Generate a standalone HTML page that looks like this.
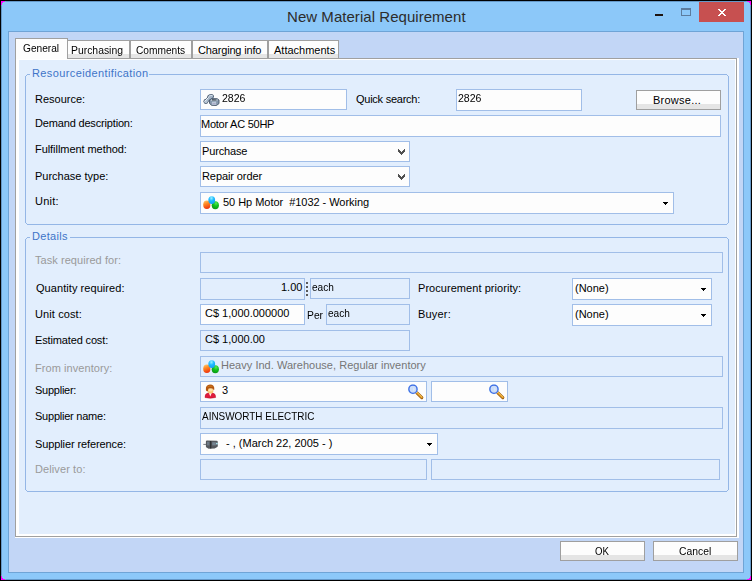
<!DOCTYPE html>
<html><head><meta charset="utf-8"><title>New Material Requirement</title>
<style>
html,body{margin:0;padding:0}
body{width:752px;height:581px;position:relative;overflow:hidden;background:#000;font-family:"Liberation Sans",sans-serif}
body div,body svg,body span{position:absolute;box-sizing:content-box}
.t{white-space:pre;line-height:14px;font-size:11px;transform-origin:0 0}
.f{border:1px solid #A1BEE8}
.btn{border:1px solid #9F9F9F;background:#FDFDFD}
.btn i{position:absolute;left:0;right:0;bottom:0;height:5px;background:#E5E5E5}
.tab{border:1px solid #A0A0A0;border-bottom:none;background:#FDFDFD}
.tab i{position:absolute;left:0;right:0;bottom:0;height:4px;background:#E5E5E5}
.grp{border:1px solid #94B6E6;border-radius:3px}
.m{background:#FF00FF}
</style></head><body>

<div style="left:1px;top:1px;width:750px;height:579px;background:#6598C8"></div>
<div style="left:2px;top:2px;width:748px;height:577px;background:#8CC8F9"></div>
<div style="left:1px;top:1px;width:4px;height:1px;background:#FF00FF"></div>
<div style="left:1px;top:2px;width:2px;height:1px;background:#FF00FF"></div>
<div style="left:1px;top:3px;width:1px;height:1px;background:#FF00FF"></div>
<div style="left:1px;top:4px;width:1px;height:1px;background:#FF00FF"></div>
<div style="left:5px;top:1px;width:1px;height:1px;background:#6CB2CE"></div>
<div style="left:3px;top:2px;width:1px;height:1px;background:#76DCF2"></div>
<div style="left:2px;top:3px;width:1px;height:1px;background:#76DCF2"></div>
<div style="left:1px;top:5px;width:1px;height:1px;background:#6CB2CE"></div>
<div style="left:747px;top:1px;width:4px;height:1px;background:#FF00FF"></div>
<div style="left:749px;top:2px;width:2px;height:1px;background:#FF00FF"></div>
<div style="left:750px;top:3px;width:1px;height:1px;background:#FF00FF"></div>
<div style="left:750px;top:4px;width:1px;height:1px;background:#FF00FF"></div>
<div style="left:746px;top:1px;width:1px;height:1px;background:#6CB2CE"></div>
<div style="left:748px;top:2px;width:1px;height:1px;background:#76DCF2"></div>
<div style="left:749px;top:3px;width:1px;height:1px;background:#76DCF2"></div>
<div style="left:750px;top:5px;width:1px;height:1px;background:#6CB2CE"></div>
<div style="left:1px;top:579px;width:4px;height:1px;background:#FF00FF"></div>
<div style="left:1px;top:578px;width:2px;height:1px;background:#FF00FF"></div>
<div style="left:1px;top:577px;width:1px;height:1px;background:#FF00FF"></div>
<div style="left:1px;top:576px;width:1px;height:1px;background:#FF00FF"></div>
<div style="left:5px;top:579px;width:1px;height:1px;background:#6CB2CE"></div>
<div style="left:3px;top:578px;width:1px;height:1px;background:#76DCF2"></div>
<div style="left:2px;top:577px;width:1px;height:1px;background:#76DCF2"></div>
<div style="left:1px;top:575px;width:1px;height:1px;background:#6CB2CE"></div>
<div style="left:747px;top:579px;width:4px;height:1px;background:#FF00FF"></div>
<div style="left:749px;top:578px;width:2px;height:1px;background:#FF00FF"></div>
<div style="left:750px;top:577px;width:1px;height:1px;background:#FF00FF"></div>
<div style="left:750px;top:576px;width:1px;height:1px;background:#FF00FF"></div>
<div style="left:746px;top:579px;width:1px;height:1px;background:#6CB2CE"></div>
<div style="left:748px;top:578px;width:1px;height:1px;background:#76DCF2"></div>
<div style="left:749px;top:577px;width:1px;height:1px;background:#76DCF2"></div>
<div style="left:750px;top:575px;width:1px;height:1px;background:#6CB2CE"></div>
<div style="left:699px;top:2px;width:45px;height:20px;background:#C75050"></div>
<div style="left:718px;top:9px;width:2px;height:1px;background:#FFFFFF"></div>
<div style="left:724px;top:9px;width:2px;height:1px;background:#FFFFFF"></div>
<div style="left:719px;top:10px;width:2px;height:1px;background:#FFFFFF"></div>
<div style="left:723px;top:10px;width:2px;height:1px;background:#FFFFFF"></div>
<div style="left:720px;top:11px;width:4px;height:1px;background:#FFFFFF"></div>
<div style="left:721px;top:12px;width:2px;height:1px;background:#FFFFFF"></div>
<div style="left:720px;top:13px;width:4px;height:1px;background:#FFFFFF"></div>
<div style="left:719px;top:14px;width:2px;height:1px;background:#FFFFFF"></div>
<div style="left:723px;top:14px;width:2px;height:1px;background:#FFFFFF"></div>
<div style="left:718px;top:15px;width:2px;height:1px;background:#FFFFFF"></div>
<div style="left:724px;top:15px;width:2px;height:1px;background:#FFFFFF"></div>
<div style="left:655px;top:14px;width:8px;height:2px;background:#1E1410"></div>
<div style="left:681px;top:8px;width:8px;height:5px;border:1px solid #5C7C9E;border-top-width:2px"></div>
<div style="left:8px;top:31px;width:734px;height:540px;border:1px solid #6FA4D6;background:#C2D6F6"></div>
<div style="left:15px;top:58px;width:724px;height:480px;background:#FFFFFF"></div>
<div style="left:15px;top:58px;width:722px;height:479px;background:#A0A0A0"></div>
<div style="left:16px;top:59px;width:720px;height:477px;background:#FFFFFF"></div>
<div style="left:19px;top:60px;width:716px;height:474px;background:#E2EEFD"></div>
<div class="tab" style="left:67px;top:40px;width:61px;height:17px"><i></i></div>
<div class="tab" style="left:130px;top:40px;width:60px;height:17px"><i></i></div>
<div class="tab" style="left:192px;top:40px;width:74px;height:17px"><i></i></div>
<div class="tab" style="left:268px;top:40px;width:69px;height:17px"><i></i></div>
<div style="left:15px;top:38px;width:51px;height:20px;border:1px solid #A0A0A0;border-bottom:none;background:#FDFDFD"></div>
<div style="left:27px;top:74px;width:700px;height:1px;background:#94B6E6"></div><div style="left:27px;top:224px;width:700px;height:1px;background:#94B6E6"></div><div style="left:25px;top:76px;width:1px;height:147px;background:#94B6E6"></div><div style="left:728px;top:76px;width:1px;height:147px;background:#94B6E6"></div><div style="left:26px;top:75px;width:1px;height:1px;background:#94B6E6"></div><div style="left:727px;top:75px;width:1px;height:1px;background:#94B6E6"></div><div style="left:26px;top:223px;width:1px;height:1px;background:#94B6E6"></div><div style="left:727px;top:223px;width:1px;height:1px;background:#94B6E6"></div>
<div style="left:30px;top:70px;width:119px;height:10px;background:#E2EEFD"></div>
<div style="left:27px;top:237px;width:700px;height:1px;background:#94B6E6"></div><div style="left:27px;top:491px;width:700px;height:1px;background:#94B6E6"></div><div style="left:25px;top:239px;width:1px;height:251px;background:#94B6E6"></div><div style="left:728px;top:239px;width:1px;height:251px;background:#94B6E6"></div><div style="left:26px;top:238px;width:1px;height:1px;background:#94B6E6"></div><div style="left:727px;top:238px;width:1px;height:1px;background:#94B6E6"></div><div style="left:26px;top:490px;width:1px;height:1px;background:#94B6E6"></div><div style="left:727px;top:490px;width:1px;height:1px;background:#94B6E6"></div>
<div style="left:30px;top:233px;width:40px;height:10px;background:#E2EEFD"></div>
<div class="f" style="left:200px;top:89px;width:145px;height:19px;background:#FDFDFD"></div>
<div class="f" style="left:456px;top:89px;width:124px;height:20px;background:#FDFDFD"></div>
<div class="btn" style="left:636px;top:90px;width:83px;height:18px"><i></i></div>
<div class="f" style="left:200px;top:115px;width:519px;height:20px;background:#FDFDFD"></div>
<div class="f" style="left:200px;top:141px;width:208px;height:19px;background:#FDFDFD"></div>
<div style="left:398px;top:149px;width:1px;height:1px;background:#505050"></div><div style="left:404px;top:149px;width:1px;height:1px;background:#505050"></div><div style="left:398px;top:150px;width:2px;height:1px;background:#505050"></div><div style="left:403px;top:150px;width:2px;height:1px;background:#505050"></div><div style="left:398px;top:151px;width:3px;height:1px;background:#505050"></div><div style="left:402px;top:151px;width:3px;height:1px;background:#505050"></div><div style="left:399px;top:152px;width:5px;height:1px;background:#505050"></div><div style="left:400px;top:153px;width:3px;height:1px;background:#505050"></div><div style="left:401px;top:154px;width:1px;height:1px;background:#505050"></div>
<div class="f" style="left:200px;top:166px;width:208px;height:19px;background:#FDFDFD"></div>
<div style="left:398px;top:174px;width:1px;height:1px;background:#505050"></div><div style="left:404px;top:174px;width:1px;height:1px;background:#505050"></div><div style="left:398px;top:175px;width:2px;height:1px;background:#505050"></div><div style="left:403px;top:175px;width:2px;height:1px;background:#505050"></div><div style="left:398px;top:176px;width:3px;height:1px;background:#505050"></div><div style="left:402px;top:176px;width:3px;height:1px;background:#505050"></div><div style="left:399px;top:177px;width:5px;height:1px;background:#505050"></div><div style="left:400px;top:178px;width:3px;height:1px;background:#505050"></div><div style="left:401px;top:179px;width:1px;height:1px;background:#505050"></div>
<div class="f" style="left:200px;top:192px;width:472px;height:20px;background:#FDFDFD"></div>
<div style="left:663px;top:202px;width:5px;height:1px;background:#000"></div><div style="left:664px;top:203px;width:3px;height:1px;background:#000"></div><div style="left:665px;top:204px;width:1px;height:1px;background:#000"></div>
<div class="f" style="left:200px;top:252px;width:521px;height:19px;background:#E2EEFD"></div>
<div class="f" style="left:200px;top:278px;width:103px;height:20px;background:#E2EEFD"></div>
<div style="left:306px;top:282px;width:2px;height:2px;background:#5A5A5A"></div>
<div style="left:306px;top:286px;width:2px;height:2px;background:#5A5A5A"></div>
<div style="left:306px;top:290px;width:2px;height:2px;background:#5A5A5A"></div>
<div style="left:306px;top:294px;width:2px;height:2px;background:#5A5A5A"></div>
<div class="f" style="left:310px;top:278px;width:98px;height:19px;background:#E2EEFD"></div>
<div class="f" style="left:572px;top:278px;width:138px;height:20px;background:#FDFDFD"></div>
<div style="left:701px;top:288px;width:5px;height:1px;background:#000"></div><div style="left:702px;top:289px;width:3px;height:1px;background:#000"></div><div style="left:703px;top:290px;width:1px;height:1px;background:#000"></div>
<div class="f" style="left:200px;top:304px;width:103px;height:19px;background:#FDFDFD"></div>
<div class="f" style="left:326px;top:304px;width:82px;height:19px;background:#E2EEFD"></div>
<div class="f" style="left:572px;top:304px;width:138px;height:20px;background:#FDFDFD"></div>
<div style="left:701px;top:314px;width:5px;height:1px;background:#000"></div><div style="left:702px;top:315px;width:3px;height:1px;background:#000"></div><div style="left:703px;top:316px;width:1px;height:1px;background:#000"></div>
<div class="f" style="left:200px;top:330px;width:208px;height:19px;background:#E2EEFD"></div>
<div class="f" style="left:200px;top:356px;width:521px;height:19px;background:#E2EEFD"></div>
<div class="f" style="left:200px;top:381px;width:225px;height:19px;background:#FDFDFD"></div>
<div class="f" style="left:431px;top:381px;width:75px;height:19px;background:#FDFDFD"></div>
<div class="f" style="left:200px;top:407px;width:521px;height:20px;background:#E2EEFD"></div>
<div class="f" style="left:200px;top:433px;width:236px;height:20px;background:#FDFDFD"></div>
<div style="left:427px;top:443px;width:5px;height:1px;background:#000"></div><div style="left:428px;top:444px;width:3px;height:1px;background:#000"></div><div style="left:429px;top:445px;width:1px;height:1px;background:#000"></div>
<div class="f" style="left:200px;top:459px;width:225px;height:19px;background:#E2EEFD"></div>
<div class="f" style="left:431px;top:459px;width:287px;height:19px;background:#E2EEFD"></div>
<svg style="left:203px;top:93px" width="17" height="13" viewBox="0 0 17 13">
<g transform="translate(0 0.7)">
<path d="M2.9 7.8 L7 3.6" stroke="#4E5E72" stroke-width="3.9" stroke-linecap="round" fill="none"/>
<circle cx="2.9" cy="7.8" r="2.45" fill="#4E5E72"/>
<ellipse cx="7.6" cy="3" rx="3.4" ry="2.6" transform="rotate(-20 7.6 3)" fill="#4E5E72"/>
<path d="M2.9 7.8 L7 3.6" stroke="#A9B9CA" stroke-width="2.5" stroke-linecap="round" fill="none"/>
<circle cx="2.9" cy="7.8" r="1.7" fill="#B7C5D4"/>
<ellipse cx="7.6" cy="3" rx="2.6" ry="1.8" transform="rotate(-20 7.6 3)" fill="#A2B3C6"/>
<path d="M2 7.4 L5.4 3.9" stroke="#EEF3F8" stroke-width="1" stroke-linecap="round" fill="none"/>
<path d="M6 2.5 Q7.2 1.2 9 1.7" stroke="#DDE6EF" stroke-width="0.9" stroke-linecap="round" fill="none"/>
</g>
<path d="M6.5 7 L9 5.6 L14.2 5.7 L16 7 L16 10.6 L13.4 12.5 L8.6 12.3 L6.5 10.4Z" fill="#8496AB" stroke="#46566A" stroke-width="0.9"/>
<path d="M7.5 7 L9.4 6.1 L13.9 6.2 L15 7.1 L13.1 8.2 L9 8.1Z" fill="#CFDAE5"/>
<path d="M9 6.9 L13.6 7" stroke="#222C36" stroke-width="1.1"/>
<path d="M8.9 8.7 L13.1 8.8 L13.1 11.9 L8.9 11.8Z" fill="#B9C6D5"/>
<path d="M9.6 10.6 L12.6 10.7" stroke="#A8A2C6" stroke-width="0.9"/>
</svg>
<svg style="left:203px;top:196px" width="17" height="14" viewBox="0 0 17 14">
<defs>
<linearGradient id="go1" x1="0" y1="0" x2="0.3" y2="1"><stop offset="0" stop-color="#FFD27A"/><stop offset="0.45" stop-color="#FF8A24"/><stop offset="1" stop-color="#EE3A10"/></linearGradient>
<radialGradient id="gb1" cx="45%" cy="25%" r="80%"><stop offset="0" stop-color="#9CF0FF"/><stop offset="0.45" stop-color="#1CBCFF"/><stop offset="1" stop-color="#1A98F2"/></radialGradient>
<radialGradient id="gg1" cx="60%" cy="25%" r="80%"><stop offset="0" stop-color="#58E858"/><stop offset="0.45" stop-color="#10C41C"/><stop offset="1" stop-color="#0A9414"/></radialGradient>
</defs>
<ellipse cx="3.8" cy="8.8" rx="3.6" ry="4.3" fill="url(#go1)"/>
<ellipse cx="12.3" cy="9.2" rx="3.6" ry="4" fill="url(#gg1)"/>
<ellipse cx="8.75" cy="4.1" rx="3.4" ry="3.9" fill="url(#gb1)"/>
</svg>
<svg style="left:203px;top:360px" width="17" height="14" viewBox="0 0 17 14">
<defs>
<linearGradient id="go2" x1="0" y1="0" x2="0.3" y2="1"><stop offset="0" stop-color="#FFD27A"/><stop offset="0.45" stop-color="#FF8A24"/><stop offset="1" stop-color="#EE3A10"/></linearGradient>
<radialGradient id="gb2" cx="45%" cy="25%" r="80%"><stop offset="0" stop-color="#9CF0FF"/><stop offset="0.45" stop-color="#1CBCFF"/><stop offset="1" stop-color="#1A98F2"/></radialGradient>
<radialGradient id="gg2" cx="60%" cy="25%" r="80%"><stop offset="0" stop-color="#58E858"/><stop offset="0.45" stop-color="#10C41C"/><stop offset="1" stop-color="#0A9414"/></radialGradient>
</defs>
<ellipse cx="3.8" cy="8.8" rx="3.6" ry="4.3" fill="url(#go2)"/>
<ellipse cx="12.3" cy="9.2" rx="3.6" ry="4" fill="url(#gg2)"/>
<ellipse cx="8.75" cy="4.1" rx="3.4" ry="3.9" fill="url(#gb2)"/>
</svg>
<svg style="left:204px;top:384px" width="13" height="15" viewBox="0 0 13 15">
<path d="M1 13.5 Q0.7 9.7 4 9 L8.7 9 Q11.9 9.7 11.6 13.5 Q6.3 14.9 1 13.5Z" fill="#E01C3C" stroke="#B80E2A" stroke-width="0.5"/>
<path d="M4.9 9.1 L6.3 12.6 L7.7 9.1Z" fill="#FFF6F6"/>
<ellipse cx="6.5" cy="6.9" rx="2.9" ry="2.6" fill="#FBC878"/>
<ellipse cx="6.5" cy="6.2" rx="2.2" ry="1.3" fill="#FFE6A8"/>
<path d="M1.9 5.9 Q1.4 0.8 6 0.6 Q10.6 0.7 10.3 5.2 Q9.9 7 9.4 5.4 Q8 3.9 4.8 4.5 Q3.8 5 3.9 7.2 Q2.3 7.6 1.9 5.9Z" fill="#B4560E"/>
<path d="M3.4 3 Q5.6 1.4 8.4 2.4" stroke="#D07A1C" stroke-width="1" fill="none"/>
</svg>
<svg style="left:203px;top:439px" width="16" height="11" viewBox="0 0 16 11">
<defs><filter id="mb" x="-10%" y="-10%" width="120%" height="120%"><feGaussianBlur stdDeviation="0.6"/></filter></defs>
<g filter="url(#mb)">
<rect x="0.3" y="4.9" width="3" height="0.9" fill="#6C7076"/>
<path d="M2.9 2.4 Q2.9 1.5 4 1.5 L13.6 1.7 Q14.8 1.8 14.8 3 L14.8 7 Q14.8 8 13.8 8.2 L11.6 9.6 L5.6 9.7 L3.6 8.6 Q2.9 8.4 2.9 7.6Z" fill="#55585D"/>
<rect x="4" y="2.8" width="2.4" height="3.6" fill="#6E7A86"/>
<rect x="9.2" y="3.2" width="3.6" height="3.2" fill="#75838F"/>
<rect x="13" y="3.8" width="1.8" height="1.6" fill="#A8DDE6"/>
<rect x="7" y="2" width="1.3" height="7.4" fill="#2E3034"/>
</g>
</svg>
<svg style="left:408px;top:384px" width="16" height="16" viewBox="0 0 16 16">
<path d="M8.4 8.4 L13.8 13.7" stroke="#9A5A0C" stroke-width="3.1" stroke-linecap="round"/>
<path d="M8.6 8.4 L13.7 13.4" stroke="#E9A32C" stroke-width="1.7" stroke-linecap="round"/>
<path d="M9.6 8.6 L14 12.9" stroke="#F6D066" stroke-width="0.6" stroke-linecap="round"/>
<circle cx="4.95" cy="5.2" r="5" fill="#C6E4FD"/>
<circle cx="4.95" cy="5.2" r="4.1" fill="#CBDDF9" stroke="#3D6CE4" stroke-width="1.3"/>
<path d="M5.2 3.2 L7 5.2 L5.2 7.2" fill="#DCE9FC"/>
</svg>
<svg style="left:489px;top:384px" width="16" height="16" viewBox="0 0 16 16">
<path d="M8.4 8.4 L13.8 13.7" stroke="#9A5A0C" stroke-width="3.1" stroke-linecap="round"/>
<path d="M8.6 8.4 L13.7 13.4" stroke="#E9A32C" stroke-width="1.7" stroke-linecap="round"/>
<path d="M9.6 8.6 L14 12.9" stroke="#F6D066" stroke-width="0.6" stroke-linecap="round"/>
<circle cx="4.95" cy="5.2" r="5" fill="#C6E4FD"/>
<circle cx="4.95" cy="5.2" r="4.1" fill="#CBDDF9" stroke="#3D6CE4" stroke-width="1.3"/>
<path d="M5.2 3.2 L7 5.2 L5.2 7.2" fill="#DCE9FC"/>
</svg>
<div class="btn" style="left:560px;top:541px;width:83px;height:18px"><i></i></div>
<div class="btn" style="left:653px;top:541px;width:83px;height:18px"><i></i></div>
<span class="t" style="left:287px;top:10px;color:#2C2C2C;letter-spacing:0.043px;font-size:15px">New Material Requirement</span>
<span class="t" style="left:23px;top:41px;color:#000000;transform:scaleX(0.9231)">General</span>
<span class="t" style="left:71px;top:43px;color:#000000;transform:scaleX(0.9444)">Purchasing</span>
<span class="t" style="left:136px;top:43px;color:#000000;transform:scaleX(0.9245)">Comments</span>
<span class="t" style="left:198px;top:43px;color:#000000;letter-spacing:-0.167px">Charging info</span>
<span class="t" style="left:274px;top:43px;color:#000000">Attachments</span>
<span class="t" style="left:32px;top:66px;color:#4074C8;letter-spacing:0.381px">Resourceidentification</span>
<span class="t" style="left:32px;top:229px;color:#4074C8;letter-spacing:0.333px">Details</span>
<span class="t" style="left:35px;top:92px;color:#000000">Resource:</span>
<span class="t" style="left:35px;top:116px;color:#000000;letter-spacing:-0.167px">Demand description:</span>
<span class="t" style="left:35px;top:142px;color:#000000;letter-spacing:-0.056px">Fulfillment method:</span>
<span class="t" style="left:35px;top:169px;color:#000000">Purchase type:</span>
<span class="t" style="left:35px;top:194px;color:#000000;letter-spacing:0.25px">Unit:</span>
<span class="t" style="left:35px;top:253px;color:#9A9A9A;letter-spacing:0.059px">Task required for:</span>
<span class="t" style="left:36px;top:281px;color:#000000;letter-spacing:0.059px">Quantity required:</span>
<span class="t" style="left:35px;top:307px;color:#000000;letter-spacing:0.111px">Unit cost:</span>
<span class="t" style="left:35px;top:333px;color:#000000;letter-spacing:-0.143px">Estimated cost:</span>
<span class="t" style="left:35px;top:361px;color:#9A9A9A;letter-spacing:0.071px">From inventory:</span>
<span class="t" style="left:35px;top:383px;color:#000000;letter-spacing:-0.25px">Supplier:</span>
<span class="t" style="left:35px;top:409px;color:#000000;letter-spacing:-0.231px">Supplier name:</span>
<span class="t" style="left:35px;top:437px;color:#000000;letter-spacing:-0.111px">Supplier reference:</span>
<span class="t" style="left:35px;top:462px;color:#9A9A9A;letter-spacing:0.1px">Deliver to:</span>
<span class="t" style="left:356px;top:92px;color:#000000;letter-spacing:-0.25px">Quick search:</span>
<span class="t" style="left:418px;top:281px;color:#000000;letter-spacing:0.05px">Procurement priority:</span>
<span class="t" style="left:418px;top:307px;color:#000000;letter-spacing:0.2px">Buyer:</span>
<span class="t" style="left:222px;top:91px;color:#000000;transform:scaleX(0.9583)">2826</span>
<span class="t" style="left:201px;top:117px;color:#000000;letter-spacing:-0.25px">Motor AC 50HP</span>
<span class="t" style="left:458px;top:91px;color:#000000;transform:scaleX(0.9583)">2826</span>
<span class="t" style="left:653px;top:93px;color:#000000;letter-spacing:0.25px">Browse...</span>
<span class="t" style="left:202px;top:144px;color:#000000;letter-spacing:-0.143px">Purchase</span>
<span class="t" style="left:202px;top:169px;color:#000000;letter-spacing:-0.091px">Repair order</span>
<span class="t" style="left:223px;top:195px;color:#000000;letter-spacing:-0.037px">50 Hp Motor  #1032 - Working</span>
<span class="t" style="left:281px;top:280px;color:#000000">1.00</span>
<span class="t" style="left:312px;top:280px;color:#000000;transform:scaleX(0.9167)">each</span>
<span class="t" style="left:205px;top:306px;color:#000000">C$ 1,000.000000</span>
<span class="t" style="left:307px;top:308px;color:#000000;transform:scaleX(0.9375)">Per</span>
<span class="t" style="left:328px;top:306px;color:#000000;transform:scaleX(0.9167)">each</span>
<span class="t" style="left:205px;top:332px;color:#000000">C$ 1,000.00</span>
<span class="t" style="left:221px;top:358px;color:#767676;letter-spacing:0.026px">Heavy Ind. Warehouse, Regular inventory</span>
<span class="t" style="left:222px;top:383px;color:#000000">3</span>
<span class="t" style="left:202px;top:409px;color:#000000;transform:scaleX(0.9032)">AINSWORTH ELECTRIC</span>
<span class="t" style="left:226px;top:436px;color:#000000">- , (March 22, 2005 - )</span>
<span class="t" style="left:575px;top:281px;color:#000000">(None)</span>
<span class="t" style="left:575px;top:307px;color:#000000">(None)</span>
<span class="t" style="left:595px;top:544px;color:#000000;transform:scaleX(0.875)">OK</span>
<span class="t" style="left:679px;top:544px;color:#000000;transform:scaleX(0.9412)">Cancel</span>
</body></html>
